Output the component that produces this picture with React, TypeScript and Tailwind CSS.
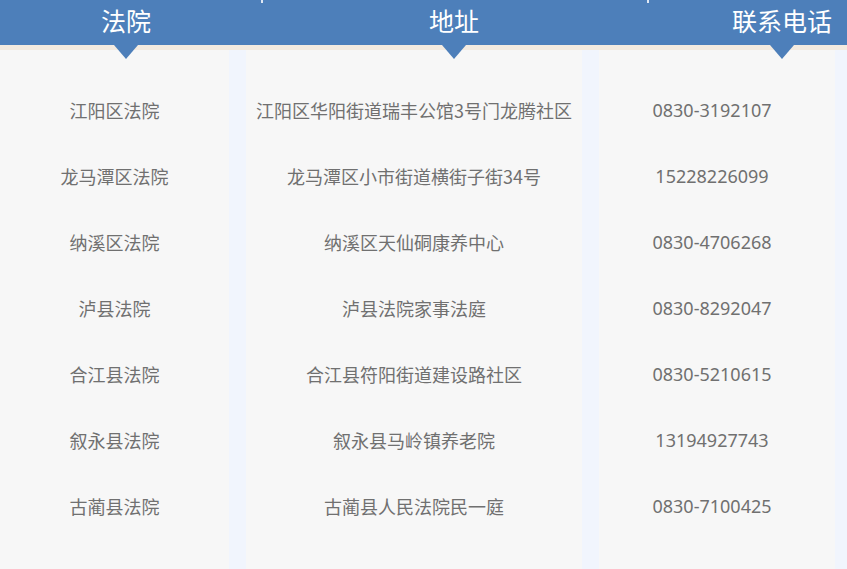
const courts = [
  { name: "江阳区法院", address: "江阳区华阳街道瑞丰公馆3号门龙腾社区", phone: "0830-3192107" },
  { name: "龙马潭区法院", address: "龙马潭区小市街道横街子街34号", phone: "15228226099" },
  { name: "纳溪区法院", address: "纳溪区天仙硐康养中心", phone: "0830-4706268" },
  { name: "泸县法院", address: "泸县法院家事法庭", phone: "0830-8292047" },
  { name: "合江县法院", address: "合江县符阳街道建设路社区", phone: "0830-5210615" },
  { name: "叙永县法院", address: "叙永县马岭镇养老院", phone: "13194927743" },
  { name: "古蔺县法院", address: "古蔺县人民法院民一庭", phone: "0830-7100425" },
];

const headers = [
  { label: "法院", width: "w-[252px]" },
  { label: "地址", width: "w-[404px]" },
  { label: "联系电话", width: "w-[252px]" },
];

function HeaderCell({ label, width }: { label: string; width: string }) {
  return (
    <div className={`relative flex h-full shrink-0 items-center justify-center ${width}`}>
      <span className="mb-[5px] text-[25px] leading-none text-white">{label}</span>
      <span className="absolute left-1/2 top-[45px] -ml-[12px] h-0 w-0 border-x-[12px] border-t-[14px] border-x-transparent border-t-[#4d7fba]" />
    </div>
  );
}

export default function App() {
  return (
    <div
      className="flex h-[569px] w-[847px] flex-col overflow-hidden bg-[#f7f7f7]"
      style={{ fontFamily: '"Noto Sans CJK SC", "Noto Sans", sans-serif' }}
    >
      <div className="relative z-10 flex h-[45px] shrink-0 bg-[#4d7fba]">
        {headers.map((h) => (
          <HeaderCell key={h.label} {...h} />
        ))}
        <span className="absolute left-[261px] top-0 h-[3px] w-[2px] bg-[#dfe8f4]" />
        <span className="absolute left-[647px] top-0 h-[3px] w-[2px] bg-[#dfe8f4]" />
      </div>
      <div className="h-[5px] shrink-0 bg-[#f4ebe0]" />

      <div className="flex flex-1 text-[18px] text-[#707070]">
        <div className="flex w-[229px] flex-col pt-[27px]">
          {courts.map((c) => (
            <div key={c.name} className="flex h-[66px] items-center justify-center">
              {c.name}
            </div>
          ))}
        </div>
        <div className="w-[17px] bg-[#f1f5fd]" />
        <div className="flex w-[336px] flex-col pt-[27px]">
          {courts.map((c) => (
            <div key={c.name} className="flex h-[66px] items-center justify-center whitespace-nowrap">
              {c.address}
            </div>
          ))}
        </div>
        <div className="w-[17px] bg-[#f1f5fd]" />
        <div
          className="flex w-[236px] flex-col pr-[10px] pt-[27px]"
          style={{ fontFamily: '"Noto Sans", "Noto Sans CJK SC", sans-serif' }}
        >
          {courts.map((c) => (
            <div key={c.name} className="flex h-[66px] items-center justify-center">
              {c.phone}
            </div>
          ))}
        </div>
        <div className="flex-1 bg-[#f1f5fd]" />
      </div>
    </div>
  );
}
